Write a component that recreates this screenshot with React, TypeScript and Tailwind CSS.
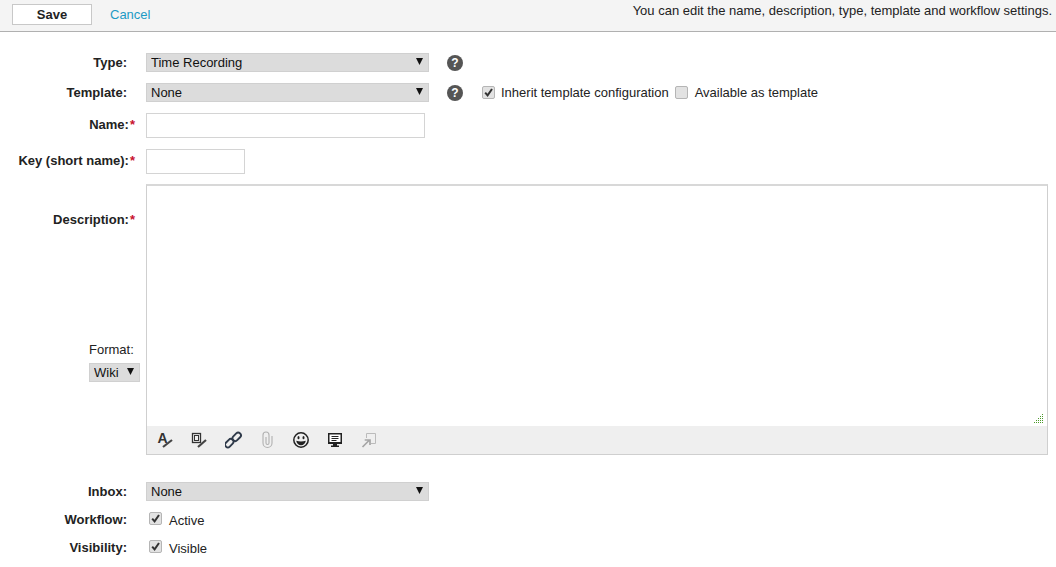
import React from "react";

const Help = () => (
  <span className="flex h-[16px] w-[16px] items-center justify-center rounded-full bg-[#555] text-[12px] font-bold leading-none text-white">?</span>
);

const Check = ({ on }: { on: boolean }) => (
  <span className="flex h-[13px] w-[13px] shrink-0 items-center justify-center rounded-[2px] border border-[#b5b5b5] bg-[#e2e2e2]">
    {on && (
      <svg width="11" height="11" viewBox="0 0 11 11">
        <path d="M2.2 5.6 L4.6 8.4 L9 2" fill="none" stroke="#333" strokeWidth="2" />
      </svg>
    )}
  </span>
);

const Sel = ({ text, cls }: { text: string; cls: string }) => (
  <div className={`relative h-[19px] ${cls}`}>
    <select className="h-full w-full appearance-none rounded-none border border-[#d0d0d0] bg-[#dcdcdc] pl-[4px] text-[13px] leading-[17px] text-[#111] outline-none">
      <option>{text}</option>
    </select>
    <svg className="absolute right-[6px] top-[5px]" width="7" height="7" viewBox="0 0 7 7">
      <path d="M0 0 H7 L3.5 7 Z" fill="#111" />
    </svg>
  </div>
);

const Label = ({ text, req }: { text: string; req?: boolean }) => (
  <div className="w-[135px] shrink-0 text-right font-bold text-[#222]">
    {text}
    {req ? <span className="ml-[1px] text-[#c8102e]">*</span> : <span className="inline-block w-[8px]" />}
  </div>
);

const A = () => (
  <svg width="18" height="18" viewBox="0 0 18 18">
    <text x="0.5" y="12" fontSize="14" fontWeight="bold" fontFamily="Liberation Sans" fill="#333">A</text>
    <path d="M6 16 L15 9" stroke="#444" strokeWidth="2.2" />
  </svg>
);
const Box = () => (
  <svg width="18" height="18" viewBox="0 0 18 18" fill="none" stroke="#333">
    <rect x="1.5" y="2.5" width="8" height="9" strokeWidth="1.3" />
    <rect x="3.5" y="4.5" width="4" height="5" />
    <path d="M7 16 L15 9" stroke="#444" strokeWidth="2.2" />
  </svg>
);
const LinkI = () => (
  <svg width="18" height="18" viewBox="0 0 18 18" fill="none" stroke="#2f3a4a" strokeWidth="1.9">
    <rect x="-0.5" y="9.5" width="9.5" height="5.5" rx="2.7" transform="rotate(-45 4.2 12.2)" />
    <rect x="7" y="3" width="9.5" height="5.5" rx="2.7" transform="rotate(-45 11.8 5.8)" />
  </svg>
);
const Clip = () => (
  <svg width="18" height="18" viewBox="0 0 18 18" fill="none" stroke="#b0b0b0" strokeWidth="1.1">
    <path d="M7 6 V12 A1.5 1.5 0 0 0 10 12 V4 A3 3 0 0 0 4 4 V12 A4.5 4.5 0 0 0 13 12 V5" />
  </svg>
);
const Smile = () => (
  <svg width="18" height="18" viewBox="0 0 18 18">
    <circle cx="8" cy="9" r="7.2" fill="none" stroke="#222" strokeWidth="1.5" />
    <ellipse cx="5.5" cy="6.7" rx="1" ry="1.6" fill="#222" />
    <ellipse cx="10.5" cy="6.7" rx="1" ry="1.6" fill="#222" />
    <path d="M3.2 9.8 Q8 11.4 12.8 9.8 Q11.8 14.2 8 14.2 Q4.2 14.2 3.2 9.8 Z" fill="#222" />
  </svg>
);
const Screen = () => (
  <svg width="18" height="18" viewBox="0 0 18 18">
    <rect x="1.75" y="2.75" width="12.5" height="9" fill="#fff" stroke="#222" strokeWidth="1.5" />
    <path d="M4.5 5.5 H11.5 M4.5 7.5 H11.5 M4.5 9.5 H9.5" stroke="#222" />
    <path d="M1 11 H15 V13 H1 Z M6 13 H10 V14.5 H6 Z M4 14.5 H12 V16 H4 Z" fill="#222" />
  </svg>
);
const Expand = () => (
  <svg width="18" height="18" viewBox="0 0 18 18" fill="none">
    <path d="M5.5 2.5 H14.5 V12.5 H10 M5.5 2.5 V7" stroke="#bbb" />
    <path d="M1.5 16 L8 9.5 M3.7 9 H9 V14" stroke="#a6a6a6" strokeWidth="1.7" />
  </svg>
);

export default function App() {
  return (
    <div className="h-[567px] w-[1056px] overflow-hidden bg-white text-[13px] leading-[15px] text-[#222] [font-family:'Liberation_Sans',Arial,sans-serif]">
      <header className="flex h-[32px] items-start border-b border-[#b0b0b0] bg-[#f4f4f4] pl-[12px] pr-[4px]">
        <button className="mt-[4px] h-[21px] w-[80px] border border-[#c8c8c8] bg-white text-center font-bold leading-[17px] text-[#222]">Save</button>
        <a className="ml-[18px] mt-[7px] text-[#1c9ac4]">Cancel</a>
        <p className="ml-auto mt-[3px] text-[#222]">You can edit the name, description, type, template and workflow settings.</p>
      </header>

      <main className="pt-[21px]">
        <div className="flex items-center">
          <div className="w-[146px] shrink-0 pb-[1px]"><Label text="Type:" /></div>
          <Sel text="Time Recording" cls="w-[283px]" />
          <span className="ml-[18px]"><Help /></span>
        </div>

        <div className="mt-[11px] flex items-center">
          <div className="w-[146px] shrink-0 pb-[1px]"><Label text="Template:" /></div>
          <Sel text="None" cls="w-[283px]" />
          <span className="ml-[18px]"><Help /></span>
          <span className="ml-[19px]"><Check on /></span>
          <span className="ml-[6px]">Inherit template configuration</span>
          <span className="ml-[6px]"><Check on={false} /></span>
          <span className="ml-[7px]">Available as template</span>
        </div>

        <div className="mt-[11px] flex items-center">
          <div className="w-[146px] shrink-0 pb-[3px]"><Label text="Name:" req /></div>
          <input className="h-[25px] w-[279px] border border-[#d4d4d4] bg-white outline-none" />
        </div>

        <div className="mt-[11px] flex items-center">
          <div className="w-[146px] shrink-0 pb-[3px]"><Label text="Key (short name):" req /></div>
          <input className="h-[25px] w-[99px] border border-[#d4d4d4] bg-white outline-none" />
        </div>

        <div className="mt-[10px] flex">
          <div className="flex w-[146px] shrink-0 flex-col">
            <div className="mt-[28px]"><Label text="Description:" req /></div>
            <div className="ml-[89px] mt-[115px] font-normal">Format:</div>
            <div className="ml-[89px] mt-[6px]">
              <Sel text="Wiki" cls="w-[51px]" />
            </div>
          </div>
          <div className="relative flex h-[271px] w-[902px] flex-col border border-t-2 border-[#cfcfcf] border-t-[#d8d8d8] bg-white">
            <div className="flex-1" />
            <svg className="absolute bottom-[30px] right-[3px]" width="10" height="10" viewBox="0 0 10 10">
              <g fill="#4c9a2a">
                <rect x="8" y="0" width="1" height="1" /><rect x="6" y="2" width="1" height="1" /><rect x="8" y="2" width="1" height="1" />
                <rect x="4" y="4" width="1" height="1" /><rect x="6" y="4" width="1" height="1" /><rect x="8" y="4" width="1" height="1" />
                <rect x="2" y="6" width="1" height="1" /><rect x="4" y="6" width="1" height="1" /><rect x="6" y="6" width="1" height="1" /><rect x="8" y="6" width="1" height="1" />
                <rect x="0" y="8" width="1" height="1" /><rect x="2" y="8" width="1" height="1" /><rect x="4" y="8" width="1" height="1" /><rect x="6" y="8" width="1" height="1" /><rect x="8" y="8" width="1" height="1" />
              </g>
            </svg>
            <div className="flex h-[28px] items-center gap-[16px] bg-[#efefef] pl-[10px]">
              <A /><Box /><LinkI /><Clip /><Smile /><Screen /><Expand />
            </div>
          </div>
        </div>

        <div className="mt-[27px] flex items-center">
          <div className="w-[146px] shrink-0 pb-[1px]"><Label text="Inbox:" /></div>
          <Sel text="None" cls="w-[283px]" />
        </div>

        <div className="mt-[10px] flex h-[18px] items-center">
          <div className="w-[146px] shrink-0 pb-[1px]"><Label text="Workflow:" /></div>
          <span className="ml-[3px] pb-[3px]"><Check on /></span>
          <span className="ml-[7px] pt-[1px]">Active</span>
        </div>

        <div className="mt-[10px] flex h-[18px] items-center">
          <div className="w-[146px] shrink-0 pb-[1px]"><Label text="Visibility:" /></div>
          <span className="ml-[3px] pb-[3px]"><Check on /></span>
          <span className="ml-[7px] pt-[1px]">Visible</span>
        </div>
      </main>
    </div>
  );
}
